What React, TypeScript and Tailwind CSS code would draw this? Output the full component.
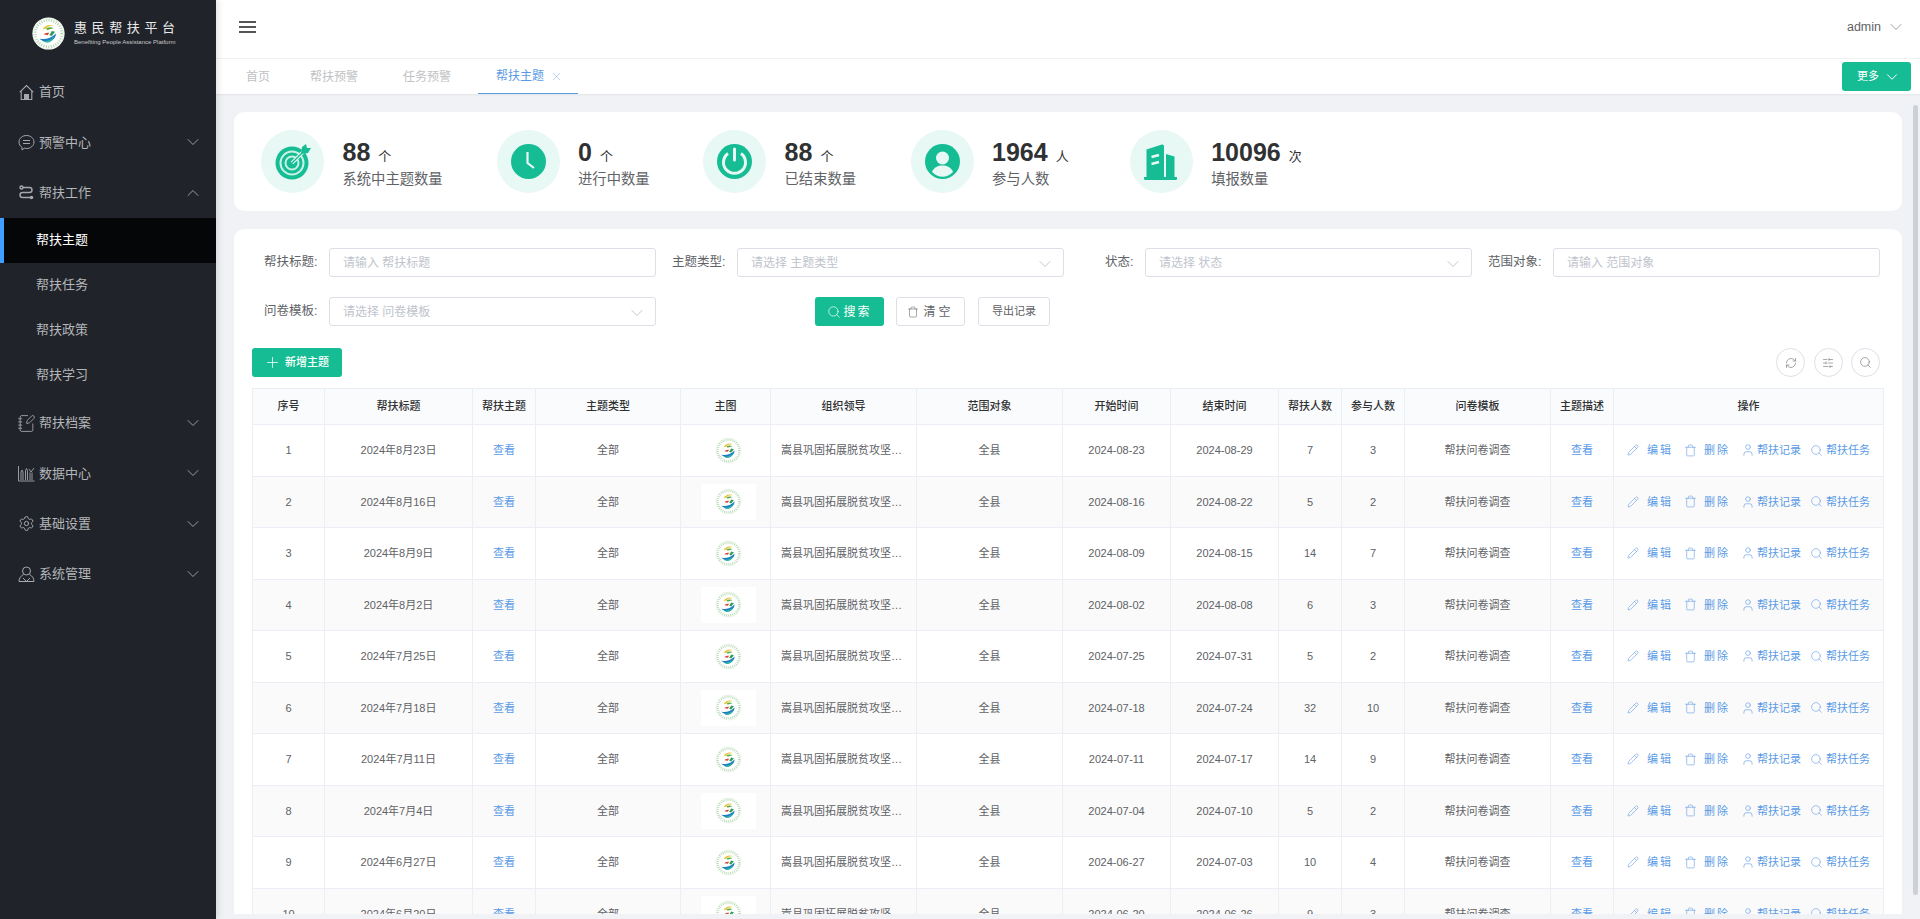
import { ChevronDown, ChevronUp, Plus, RefreshCw, Search, Settings, SlidersHorizontal, NotebookPen, Trash, User, Pencil, X } from 'lucide-react';
import type { ReactNode } from 'react';

const font = { fontFamily: '"Liberation Sans", "Noto Sans CJK SC", sans-serif' };

function Logo({ size, solid }: { size: number; solid?: boolean }) {
  return (
    <svg width={size} height={size} viewBox="0 0 40 40" className="shrink-0">
      <circle cx="20" cy="20" r="19.5" fill={solid ? '#ffffff' : 'none'} />
      <circle cx="20" cy="20" r="18.500" fill="none" stroke="#cfe6cd" strokeWidth="0.7" />
      <circle cx="20" cy="20" r="16" fill="none" stroke="#a9d3a6" strokeWidth="3" strokeDasharray="1.200 1.800" />
      <path d="M13 15c2-5 9-7 14-4-4-1-8 0-10 3z" fill="#e6c22e" />
      <path d="M17 14c3-2 7-2 9 0-3 0-5 1-7 2z" fill="#55ad3d" />
      <path d="M14 21c2-2 4-2 7-2l-2 3z" fill="#d5463c" />
      <path d="M24 17l4 1-4 5-3-1z" fill="#2f9e57" />
      <path d="M9 26c6 2 14 0 20-6 0 6-6 11-12 10-3 0-6-2-8-4z" fill="#1b7fc0" />
      <path d="M12 29c6 1 11-1 15-5-2 5-6 8-10 7z" fill="#35b5a5" />
    </svg>
  );
}

function TopMenu({ icon, label, arrow }: { icon: ReactNode; label: string; arrow?: 'up' | 'down' }) {
  return (
    <div className="h-[50.33px] flex items-center pl-[18px] pr-[13px] text-[13px] text-[#b4b6b9]">
      <span className="w-[17px] h-[17px] flex items-center justify-center shrink-0 text-[#a6a8ab]">{icon}</span>
      <span className="ml-[4px] flex-1">{label}</span>
      {arrow === 'down' && <ChevronDown size={20} strokeWidth={1.2} className="text-[#9a9c9f]" />}
      {arrow === 'up' && <ChevronUp size={20} strokeWidth={1.2} className="text-[#9a9c9f]" />}
    </div>
  );
}

function HomeIcon() {
  return (
    <svg width="17" height="17" viewBox="0 0 17 17" fill="none" stroke="currentColor" strokeWidth="1.100">
      <path d="M1.800 8.200L8.500 1.500l6.700 6.700M3.200 7v8.500h10.600V7" />
      <rect x="6" y="10" width="5" height="5.500" fill="currentColor" stroke="none" />
    </svg>
  );
}

function ChatIcon() {
  return (
    <svg width="17" height="17" viewBox="0 0 17 17" fill="none" stroke="currentColor" strokeWidth="1">
      <path d="M8.500 1.500c4 0 7.500 2.700 7.500 6.500s-3.500 6.500-7.500 6.500c-.8 0-1.500-.1-2.200-.3L4 16v-2.700C2 12.100 1 10.200 1 8c0-3.800 3.500-6.500 7.500-6.500z" />
      <path d="M5 6.500h7M5 9.500h7" />
    </svg>
  );
}

function FlowIcon() {
  return (
    <svg width="17" height="17" viewBox="0 0 17 17" fill="none" stroke="currentColor" strokeWidth="1.400">
      <circle cx="3.500" cy="3.500" r="1.500" />
      <path d="M5 3.500h6.500a2.500 2.500 0 0 1 0 5h-7a2.500 2.500 0 0 0 0 5H12" />
      <circle cx="13.500" cy="13.500" r="1.800" fill="currentColor" stroke="none" />
    </svg>
  );
}

function ChartIcon() {
  return (
    <svg width="17" height="17" viewBox="0 0 17 17" fill="none" stroke="currentColor" strokeWidth="0.9">
      <path d="M0.500 1v15h16" />
      <path d="M3 15V7M5 15V7M3 7l1-2 1 2M7.500 15V5.500M9.500 15V5.500M7.500 5.500l1-2 1 2M12 15V7.500M14 15V7.500M11 4l2 3 3-4" />
    </svg>
  );
}

function UserOutlineIcon() {
  return (
    <svg width="17" height="17" viewBox="0 0 17 17" fill="none" stroke="currentColor" strokeWidth="1">
      <circle cx="8.500" cy="5" r="4" />
      <path d="M5.500 8.500C3 9.500 1 12.500 1 15.500h15c0-3-2-6-4.500-7M5 12l3.500 3.500L12 12" />
    </svg>
  );
}

function Sidebar() {
  return (
    <aside className="w-[216px] shrink-0 h-full bg-[#20232a] relative z-20 shadow-[2px_0_6px_rgba(0,0,0,0.12)]">
      <div className="h-[67px] flex items-center pl-[32px]">
        <Logo size={33} solid />
        <div className="ml-[9px] text-white">
          <div className="text-[13px] leading-[16px] tracking-[4.600px] whitespace-nowrap text-[#e8e8e8]">惠民帮扶平台</div>
          <div className="text-[6px] leading-[9px] mt-[2px] whitespace-nowrap text-[#c8c8c8]">Benefiting People Assistance Platform</div>
        </div>
      </div>
      <TopMenu icon={<HomeIcon />} label="首页" />
      <TopMenu icon={<ChatIcon />} label="预警中心" arrow="down" />
      <TopMenu icon={<FlowIcon />} label="帮扶工作" arrow="up" />
      <div className="h-[45px] bg-[#050608] border-l-4 border-[#409eff] pl-[32px] pb-[2px] flex items-center text-[13px] text-white">帮扶主题</div>
      {['帮扶任务', '帮扶政策', '帮扶学习'].map((t) => (
        <div key={t} className="h-[45px] pl-[36px] pb-[2px] flex items-center text-[13px] text-[#b4b6b9]">{t}</div>
      ))}
      <TopMenu icon={<NotebookPen size={19} strokeWidth={1.1} className="shrink-0" />} label="帮扶档案" arrow="down" />
      <TopMenu icon={<ChartIcon />} label="数据中心" arrow="down" />
      <TopMenu icon={<Settings size={17} strokeWidth={1.4} className="shrink-0" />} label="基础设置" arrow="down" />
      <TopMenu icon={<UserOutlineIcon />} label="系统管理" arrow="down" />
    </aside>
  );
}

function Header() {
  return (
    <div className="h-[59px] shrink-0 bg-white border-b border-[#f1f2f4] flex items-center pl-[23px] pr-[14px] pb-[4px]">
      <div className="flex flex-col gap-[3.500px] w-[17px]">
        <span className="h-[1.500px] bg-[#555]" />
        <span className="h-[1.500px] bg-[#555]" />
        <span className="h-[1.500px] bg-[#555]" />
      </div>
      <div className="ml-auto flex items-center text-[12.500px] text-[#606266]">
        admin
        <ChevronDown size={20} strokeWidth={1} className="ml-[5px] text-[#8a8c90]" />
      </div>
    </div>
  );
}

function Tabs() {
  return (
    <div className="h-[35px] shrink-0 bg-white flex pl-[12px] pr-[9px] text-[12px] text-[#bfc1c4] relative z-10 shadow-[0_1px_2px_rgba(0,0,0,0.06)]">
      <div className="flex gap-[9px]">
        <div className="pl-[18px] pr-[13px] flex items-center">首页</div>
        <div className="px-[18px] flex items-center">帮扶预警</div>
        <div className="px-[18px] flex items-center">任务预警</div>
        <div className="pl-[18px] pr-[15.500px] flex items-center gap-[5.500px] text-[#5b9be6] border-b border-[#5b9be6]">
          帮扶主题
          <X size={13} strokeWidth={1} className="text-[#7fa9e8]" />
        </div>
      </div>
      <div className="ml-auto mt-[3px] w-[69px] h-[29px] rounded-[3px] bg-[#16bd94] text-white text-[11px] flex items-center pl-[15px] gap-[3.500px]">
        更多
        <ChevronDown size={18} strokeWidth={1.3} />
      </div>
    </div>
  );
}

function TargetIcon() {
  return (
    <svg width="36" height="36" viewBox="0 0 36 36">
      <circle cx="17" cy="19" r="16.500" fill="#16bd94" />
      <circle cx="17" cy="19" r="11.500" fill="none" stroke="#c9f0e5" strokeWidth="2" />
      <circle cx="17" cy="19" r="6.500" fill="none" stroke="#c9f0e5" strokeWidth="2" />
      <path d="M17 19L29 7" stroke="#e8f8f4" strokeWidth="3.500" />
      <path d="M17 19L29 7" stroke="#16bd94" strokeWidth="1.500" />
      <path d="M26 10l1-7 4-3 1 4 4 0-3 5-7 1z" fill="#16bd94" />
    </svg>
  );
}

function ClockIcon() {
  return (
    <svg width="35" height="35" viewBox="0 0 35 35">
      <circle cx="17.500" cy="17.500" r="17.500" fill="#16bd94" />
      <path d="M16.500 8v11l6.500 5" fill="none" stroke="#e8f8f4" strokeWidth="2.200" />
    </svg>
  );
}

function PowerIcon() {
  return (
    <svg width="35" height="35" viewBox="0 0 35 35">
      <circle cx="17.500" cy="17.500" r="17.500" fill="#16bd94" />
      <path d="M11 9.500a11 11 0 1 0 13 0" fill="none" stroke="#e8f8f4" strokeWidth="3" />
      <path d="M17.500 5v11" stroke="#e8f8f4" strokeWidth="3" strokeLinecap="round" />
    </svg>
  );
}

function PersonIcon() {
  return (
    <svg width="35" height="35" viewBox="0 0 35 35">
      <circle cx="17.500" cy="17.500" r="17.500" fill="#16bd94" />
      <circle cx="17.500" cy="14" r="6.500" fill="#e8f8f4" />
      <path d="M7 28c2-5 6-6.500 10.500-6.500S26 23 28 28c-3 3-6.500 4.700-10.500 4.700S10 31 7 28z" fill="#e8f8f4" />
    </svg>
  );
}

function BuildingIcon() {
  return (
    <svg width="34" height="36" viewBox="0 0 34 36">
      <path d="M2.500 33V5.500L18 .5c1 0 2 .7 2 1.500v31z" fill="#16bd94" />
      <path d="M22 33V10l8.500 2.500V33z" fill="#16bd94" />
      <path d="M0 33h33v1.500c0 .8-.5 1.500-1 1.500H1c-.5 0-1-.7-1-1.500z" fill="#16bd94" />
      <path d="M7.500 13l7.500-2M7.500 20l7.500-2" stroke="#e8f8f4" strokeWidth="2.500" />
    </svg>
  );
}

function Stat({ icon, value, unit, label, className }: { icon: ReactNode; value: string; unit: string; label: string; className: string }) {
  return (
    <div className={`flex items-center ${className}`}>
      <div className="w-[63px] h-[63px] rounded-full bg-[#e8f8f4] flex items-center justify-center shrink-0">{icon}</div>
      <div className="ml-[18.500px] pt-[4px] whitespace-nowrap">
        <div className="flex items-baseline text-[#303133] leading-[28px]">
          <span className="text-[25px] font-bold">{value}</span>
          <span className="text-[13px] ml-[8px]">{unit}</span>
        </div>
        <div className="text-[14.300px] leading-[20px] text-[#606266] mt-[-2px]">{label}</div>
      </div>
    </div>
  );
}

function FieldInput({ label, placeholder, select }: { label: string; placeholder: string; select?: boolean }) {
  return (
    <div className="flex items-center">
      <div className="w-[65.500px] text-right text-[12.500px] text-[#606266] whitespace-nowrap shrink-0">{label}:</div>
      <div className="ml-[11.500px] w-[327px] h-[29px] rounded-[3px] border border-[#dcdfe6] bg-white flex items-center pl-[13px] pr-[8px] text-[12px] text-[#c0c4cc]">
        <span className="flex-1">{placeholder}</span>
        {select && <ChevronDown size={20} strokeWidth={1} className="text-[#b8bbc2] mt-[2px]" />}
      </div>
    </div>
  );
}

function RoundButton({ children }: { children: ReactNode }) {
  return <div className="w-[29px] h-[29px] rounded-full border border-[#dcdfe6] flex items-center justify-center text-[#6b6e73]">{children}</div>;
}

function ActionIcon({ children, className }: { children: ReactNode; className: string }) {
  return <span className={`w-[10px] h-[10px] flex items-center justify-center text-[#6fa3e8] ${className}`}>{children}</span>;
}

const rows = [
  ['2024年8月23日', '2024-08-23', '2024-08-29', '7', '3'],
  ['2024年8月16日', '2024-08-16', '2024-08-22', '5', '2'],
  ['2024年8月9日', '2024-08-09', '2024-08-15', '14', '7'],
  ['2024年8月2日', '2024-08-02', '2024-08-08', '6', '3'],
  ['2024年7月25日', '2024-07-25', '2024-07-31', '5', '2'],
  ['2024年7月18日', '2024-07-18', '2024-07-24', '32', '10'],
  ['2024年7月11日', '2024-07-11', '2024-07-17', '14', '9'],
  ['2024年7月4日', '2024-07-04', '2024-07-10', '5', '2'],
  ['2024年6月27日', '2024-06-27', '2024-07-03', '10', '4'],
  ['2024年6月20日', '2024-06-20', '2024-06-26', '9', '3'],
];

const columns: [string, number][] = [
  ['序号', 72],
  ['帮扶标题', 148],
  ['帮扶主题', 63],
  ['主题类型', 145],
  ['主图', 90],
  ['组织领导', 146],
  ['范围对象', 146],
  ['开始时间', 108],
  ['结束时间', 108],
  ['帮扶人数', 63],
  ['参与人数', 63],
  ['问卷模板', 146],
  ['主题描述', 63],
  ['操作', 270],
];

function Actions() {
  return (
    <div className="flex items-center pl-[14px] text-[#5b9be6] whitespace-nowrap">
      <ActionIcon className=""><Pencil size={12} strokeWidth={1.3} className="shrink-0" /></ActionIcon>
      <span className="ml-[9px] tracking-[2px]">编辑</span>
      <ActionIcon className="ml-[12px]"><Trash size={13} strokeWidth={1.2} className="shrink-0" /></ActionIcon>
      <span className="ml-[9px] tracking-[2px]">删除</span>
      <ActionIcon className="ml-[13px]"><User size={14} strokeWidth={1.2} className="shrink-0" /></ActionIcon>
      <span className="ml-[4px]">帮扶记录</span>
      <ActionIcon className="ml-[10px]"><Search size={13} strokeWidth={1.2} className="shrink-0" /></ActionIcon>
      <span className="ml-[5px]">帮扶任务</span>
    </div>
  );
}

function DataTable() {
  return (
    <table className="table-fixed border-collapse w-[1631px] text-[11px] text-[#606266]">
      <colgroup>
        {columns.map(([name, w]) => (
          <col key={name} style={{ width: w }} />
        ))}
      </colgroup>
      <thead>
        <tr className="h-[36px] bg-[#fafbfc] text-[#303133]">
          {columns.map(([name]) => (
            <th key={name} className="border border-[#ebeef5] font-medium text-center">{name}</th>
          ))}
        </tr>
      </thead>
      <tbody>
        {rows.map((r, i) => (
          <tr key={i} className={i % 2 === 1 ? 'h-[51.500px] bg-[#fafafa]' : 'h-[51.500px] bg-white'}>
            <td className="border border-[#ebeef5] text-center">{i + 1}</td>
            <td className="border border-[#ebeef5] text-center">{r[0]}</td>
            <td className="border border-[#ebeef5] text-center text-[#5b9be6]">查看</td>
            <td className="border border-[#ebeef5] text-center">全部</td>
            <td className="border border-[#ebeef5]">
              <div className="w-[55px] h-[36px] ml-[20px] bg-white flex items-center justify-center">
                <Logo size={27} />
              </div>
            </td>
            <td className="border border-[#ebeef5] px-[10px] truncate">嵩县巩固拓展脱贫攻坚成果领导小组</td>
            <td className="border border-[#ebeef5] text-center">全县</td>
            <td className="border border-[#ebeef5] text-center">{r[1]}</td>
            <td className="border border-[#ebeef5] text-center">{r[2]}</td>
            <td className="border border-[#ebeef5] text-center">{r[3]}</td>
            <td className="border border-[#ebeef5] text-center">{r[4]}</td>
            <td className="border border-[#ebeef5] text-center">帮扶问卷调查</td>
            <td className="border border-[#ebeef5] text-center text-[#5b9be6]">查看</td>
            <td className="border border-[#ebeef5]"><Actions /></td>
          </tr>
        ))}
      </tbody>
    </table>
  );
}

export default function App() {
  return (
    <div className="flex h-screen overflow-hidden relative" style={font}>
      <Sidebar />
      <div className="flex-1 min-w-0 flex flex-col h-full bg-[#f0f2f5]">
        <Header />
        <Tabs />
        <div className="flex-1 min-h-0 pt-[18px] px-[18px] pb-[5px] flex flex-col gap-[18px]">
          {/* Summary */}
          <div className="h-[99px] shrink-0 bg-white rounded-[10px] flex items-center pl-[27px]">
            <Stat icon={<TargetIcon />} value="88" unit="个" label="系统中主题数量" className="mr-[54px]" />
            <Stat icon={<ClockIcon />} value="0" unit="个" label="进行中数量" className="mr-[53.500px]" />
            <Stat icon={<PowerIcon />} value="88" unit="个" label="已结束数量" className="mr-[54.500px]" />
            <Stat icon={<PersonIcon />} value="1964" unit="人" label="参与人数" className="mr-[61px]" />
            <Stat icon={<BuildingIcon />} value="10096" unit="次" label="填报数量" className="" />
          </div>

          {/* Filters and list */}
          <div className="flex-1 min-h-0 bg-white rounded-t-[10px] overflow-hidden pt-[19px] px-[18px]">
            <div className="grid grid-cols-4 w-[1632px] gap-y-[20px]">
              <FieldInput label="帮扶标题" placeholder="请输入 帮扶标题" />
              <FieldInput label="主题类型" placeholder="请选择 主题类型" select />
              <FieldInput label="状态" placeholder="请选择 状态" select />
              <FieldInput label="范围对象" placeholder="请输入 范围对象" />
              <FieldInput label="问卷模板" placeholder="请选择 问卷模板" select />
              <div className="col-span-3 flex items-center pl-[155px] text-[12px]">
                <div className="w-[69px] h-[29px] rounded-[3px] bg-[#16bd94] text-white flex items-center justify-center gap-[2px] tracking-[2px]">
                  <Search size={14} strokeWidth={1.2} className="shrink-0" />
                  搜索
                </div>
                <div className="ml-[12px] w-[69px] h-[29px] rounded-[3px] border border-[#dcdfe6] text-[#606266] flex items-center justify-center gap-[4px] tracking-[3px]">
                  <Trash size={12} strokeWidth={1.1} className="shrink-0" />
                  清空
                </div>
                <div className="ml-[13px] w-[72px] h-[29px] rounded-[3px] border border-[#dcdfe6] text-[#606266] text-[11px] flex items-center justify-center">导出记录</div>
              </div>
            </div>

            <div className="mt-[22px] h-[29px] flex items-center">
              <div className="w-[90px] h-[29px] rounded-[3px] bg-[#16bd94] text-white text-[11px] font-medium flex items-center pl-[11.500px] gap-[4.500px]">
                <Plus size={17} strokeWidth={1.1} className="shrink-0" />
                新增主题
              </div>
              <div className="ml-auto mr-[4px] flex gap-[8.500px]">
                <RoundButton><RefreshCw size={12} strokeWidth={1.2} /></RoundButton>
                <RoundButton><SlidersHorizontal size={12} strokeWidth={1.2} /></RoundButton>
                <RoundButton><Search size={13} strokeWidth={1.1} /></RoundButton>
              </div>
            </div>

            <div className="mt-[11px]">
              <DataTable />
            </div>
          </div>
        </div>
      </div>
      {/* Page scrollbar */}
      <div className="absolute right-[2px] top-[105px] w-[5px] h-[790px] rounded-full bg-[#cdd0d5] z-30" />
    </div>
  );
}
